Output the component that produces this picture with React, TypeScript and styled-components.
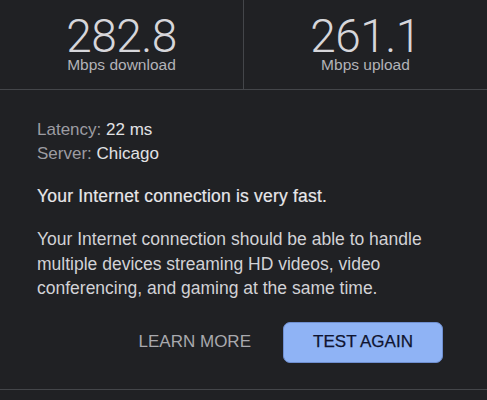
import React from "react";
import styled, { createGlobalStyle } from "styled-components";

const Global = createGlobalStyle`
  html, body { margin: 0; padding: 0; background: #202124; }
  body { font-family: "Liberation Sans", Arial, sans-serif; }
`;

const Page = styled.div`
  width: 487px;
  height: 400px;
  background: #202124;
  overflow: hidden;
  color: #e3e3e6;
`;

const Stats = styled.div`
  display: grid;
  grid-template-columns: 243px 1px 243px;
  height: 89px;
  border-bottom: 1px solid #44464a;
`;

const Divider = styled.div`
  background: #44464a;
`;

const Stat = styled.div`
  display: flex;
  flex-direction: column;
  align-items: center;
  padding-top: 14px;
`;

const Value = styled.div`
  font-family: Roboto, "Liberation Sans", Arial, sans-serif;
  font-weight: 300;
  font-size: 46px;
  line-height: 44px;
  color: #d6d6da;
  letter-spacing: -0.5px;
`;

const Unit = styled.div`
  font-size: 15.5px;
  line-height: 14px;
  color: #b3b3b8;
`;

const Body = styled.div`
  padding: 28px 44px 0 37px;
`;

const InfoLine = styled.div`
  font-size: 17px;
  line-height: 24px;
`;

const InfoLabel = styled.span`
  color: #9c9ca2;
`;

const InfoValue = styled.span`
  color: #e2e2e5;
`;

const Headline = styled.div`
  margin-top: 18px;
  font-size: 17.5px;
  line-height: 24px;
  letter-spacing: 0.2px;
  color: #e8e8eb;
  -webkit-text-stroke: 0.18px #e8e8eb;
`;

const Paragraph = styled.p`
  margin: 19px 0 0;
  font-size: 17.5px;
  line-height: 24.5px;
  color: #d2d2d6;
`;

const Actions = styled.div`
  display: flex;
  justify-content: flex-end;
  align-items: center;
  gap: 32px;
  margin-top: 21px;
  padding-bottom: 26px;
  border-bottom: 1px solid #44464a;
  margin-left: -37px;
  margin-right: -44px;
  padding-right: 44px;
`;

const TextButton = styled.button`
  background: none;
  border: none;
  padding: 0;
  font-family: "Liberation Sans", Arial, sans-serif;
  font-size: 17px;
  color: #a9a9ae;
`;

const FilledButton = styled.button`
  width: 160px;
  height: 41px;
  border-radius: 7px;
  border: 1px solid #6f8fd0;
  background: #8fb3f5;
  font-family: "Liberation Sans", Arial, sans-serif;
  font-size: 17px;
  color: #0f1430;
  -webkit-text-stroke: 0.25px #0f1430;
`;

export default function App() {
  return (
    <Page>
      <Global />
      <Stats>
        <Stat>
          <Value>282.8</Value>
          <Unit>Mbps download</Unit>
        </Stat>
        <Divider />
        <Stat>
          <Value>261.1</Value>
          <Unit>Mbps upload</Unit>
        </Stat>
      </Stats>
      <Body>
        <InfoLine>
          <InfoLabel>Latency: </InfoLabel>
          <InfoValue>22 ms</InfoValue>
        </InfoLine>
        <InfoLine>
          <InfoLabel>Server: </InfoLabel>
          <InfoValue>Chicago</InfoValue>
        </InfoLine>
        <Headline>Your Internet connection is very fast.</Headline>
        <Paragraph>
          Your Internet connection should be able to handle multiple devices
          streaming HD videos, video conferencing, and gaming at the same time.
        </Paragraph>
        <Actions>
          <TextButton>LEARN MORE</TextButton>
          <FilledButton>TEST AGAIN</FilledButton>
        </Actions>
      </Body>
    </Page>
  );
}
